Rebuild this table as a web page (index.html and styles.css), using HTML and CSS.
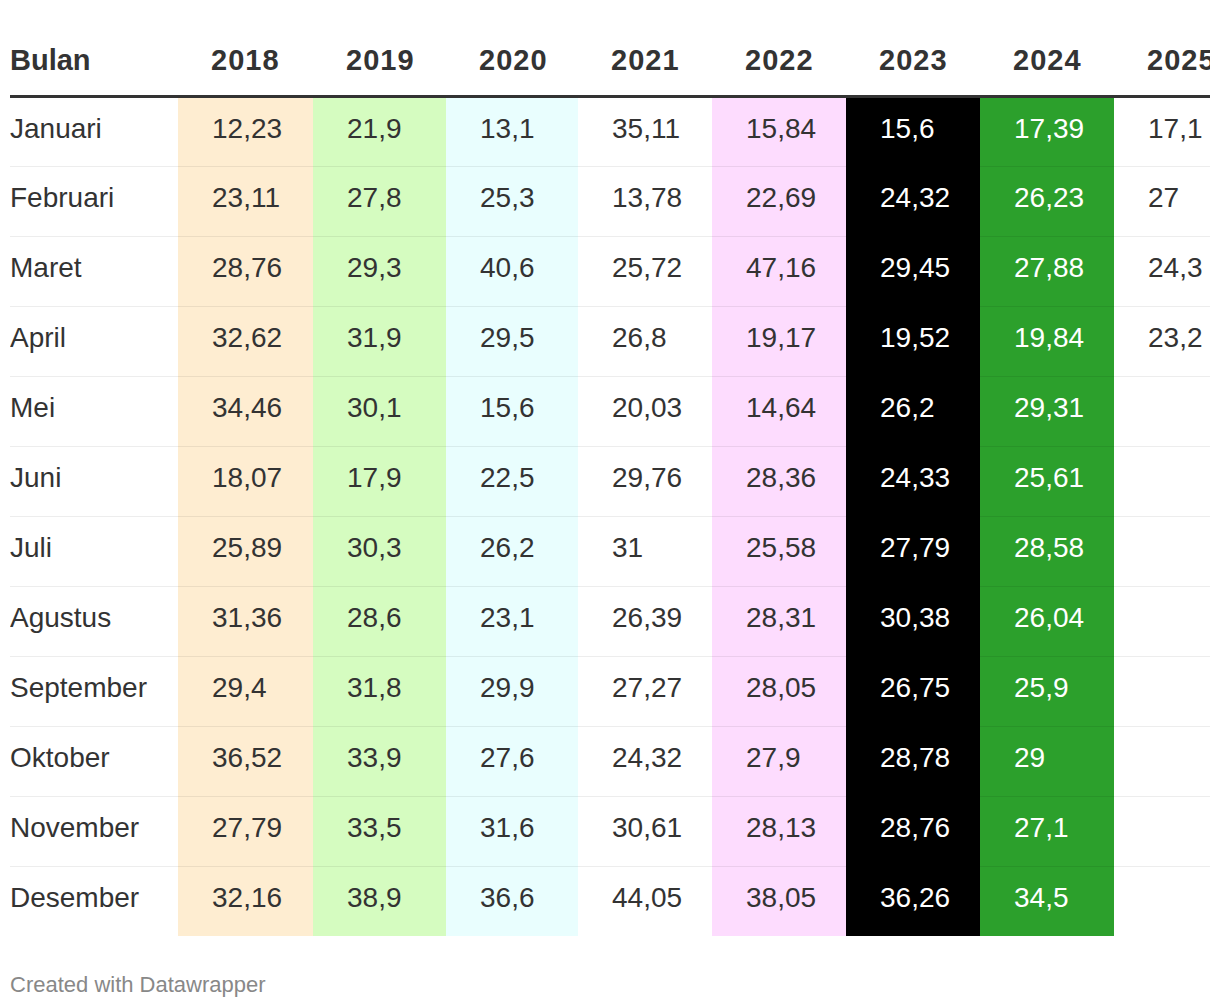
FILE: index.html
```html
<!DOCTYPE html>
<html lang="id">
<head>
<meta charset="utf-8">
<title>Tabel</title>
<link rel="stylesheet" href="styles.css">
</head>
<body>
<div class="wrap">
  <div class="scroll">
    <table class="dw">
      <colgroup>
        <col class="c-month"><col class="c-18"><col class="c-19"><col class="c-20"><col class="c-21"><col class="c-22"><col class="c-23"><col class="c-24"><col class="c-25">
      </colgroup>
      <thead>
        <tr>
          <th class="month">Bulan</th><th>2018</th><th>2019</th><th>2020</th><th>2021</th><th>2022</th><th>2023</th><th>2024</th><th>2025</th>
        </tr>
      </thead>
      <tbody>
        <tr><td class="month">Januari</td><td class="y18">12,23</td><td class="y19">21,9</td><td class="y20">13,1</td><td>35,11</td><td class="y22">15,84</td><td class="y23">15,6</td><td class="y24">17,39</td><td>17,1</td></tr>
        <tr><td class="month">Februari</td><td class="y18">23,11</td><td class="y19">27,8</td><td class="y20">25,3</td><td>13,78</td><td class="y22">22,69</td><td class="y23">24,32</td><td class="y24">26,23</td><td>27</td></tr>
        <tr><td class="month">Maret</td><td class="y18">28,76</td><td class="y19">29,3</td><td class="y20">40,6</td><td>25,72</td><td class="y22">47,16</td><td class="y23">29,45</td><td class="y24">27,88</td><td>24,3</td></tr>
        <tr><td class="month">April</td><td class="y18">32,62</td><td class="y19">31,9</td><td class="y20">29,5</td><td>26,8</td><td class="y22">19,17</td><td class="y23">19,52</td><td class="y24">19,84</td><td>23,2</td></tr>
        <tr><td class="month">Mei</td><td class="y18">34,46</td><td class="y19">30,1</td><td class="y20">15,6</td><td>20,03</td><td class="y22">14,64</td><td class="y23">26,2</td><td class="y24">29,31</td><td></td></tr>
        <tr><td class="month">Juni</td><td class="y18">18,07</td><td class="y19">17,9</td><td class="y20">22,5</td><td>29,76</td><td class="y22">28,36</td><td class="y23">24,33</td><td class="y24">25,61</td><td></td></tr>
        <tr><td class="month">Juli</td><td class="y18">25,89</td><td class="y19">30,3</td><td class="y20">26,2</td><td>31</td><td class="y22">25,58</td><td class="y23">27,79</td><td class="y24">28,58</td><td></td></tr>
        <tr><td class="month">Agustus</td><td class="y18">31,36</td><td class="y19">28,6</td><td class="y20">23,1</td><td>26,39</td><td class="y22">28,31</td><td class="y23">30,38</td><td class="y24">26,04</td><td></td></tr>
        <tr><td class="month">September</td><td class="y18">29,4</td><td class="y19">31,8</td><td class="y20">29,9</td><td>27,27</td><td class="y22">28,05</td><td class="y23">26,75</td><td class="y24">25,9</td><td></td></tr>
        <tr><td class="month">Oktober</td><td class="y18">36,52</td><td class="y19">33,9</td><td class="y20">27,6</td><td>24,32</td><td class="y22">27,9</td><td class="y23">28,78</td><td class="y24">29</td><td></td></tr>
        <tr><td class="month">November</td><td class="y18">27,79</td><td class="y19">33,5</td><td class="y20">31,6</td><td>30,61</td><td class="y22">28,13</td><td class="y23">28,76</td><td class="y24">27,1</td><td></td></tr>
        <tr><td class="month">Desember</td><td class="y18">32,16</td><td class="y19">38,9</td><td class="y20">36,6</td><td>44,05</td><td class="y22">38,05</td><td class="y23">36,26</td><td class="y24">34,5</td><td></td></tr>
      </tbody>
    </table>
  </div>
  <div class="footer">Created with Datawrapper</div>
</div>
</body>
</html>
```
FILE: styles.css
```css
* { box-sizing: border-box; }
html, body { margin: 0; padding: 0; background: #fff; }
body {
  font-family: "Liberation Sans", Arial, Helvetica, sans-serif;
  color: #333;
}
.wrap {
  padding: 0 10px;
}
.scroll {
  width: 1200px;
  overflow: hidden;
}
.dw {
  border-collapse: collapse;
  table-layout: fixed;
  width: 1238px;
}
.c-month { width: 168px; }
.c-18 { width: 135px; }
.c-19 { width: 133px; }
.c-20 { width: 132px; }
.c-21 { width: 134px; }
.c-22 { width: 134px; }
.c-23 { width: 134px; }
.c-24 { width: 134px; }
.c-25 { width: 134px; }

.dw th {
  font-size: 29px;
  font-weight: 700;
  text-align: left;
  height: 96px;
  padding: 40px 0 0 33px;
  vertical-align: top;
  line-height: 40px;
  border-bottom: 3px solid #333;
  white-space: nowrap;
  letter-spacing: 1px;
}
.dw th.month { letter-spacing: 0; }
.dw th.month, .dw td.month { padding-left: 0; }
.dw td {
  font-size: 28px;
  height: 70px;
  padding: 0 0 6px 34px;
  line-height: 30px;
  vertical-align: middle;
  white-space: nowrap;
  border-bottom: 1px solid rgba(0, 0, 0, 0.07);
}
.dw tbody tr:last-child td { border-bottom: none; }
.y18 { background: #feedd1; }
.y19 { background: #d5fcc0; }
.y20 { background: #e9fefe; }
.y22 { background: #fddcfe; }
.y23 { background: #000; color: #fff; }
.y24 { background: #2ca02c; color: #fff; }

.footer {
  margin-top: 36px;
  font-size: 22px;
  color: #888;
  line-height: 26px;
}
```
